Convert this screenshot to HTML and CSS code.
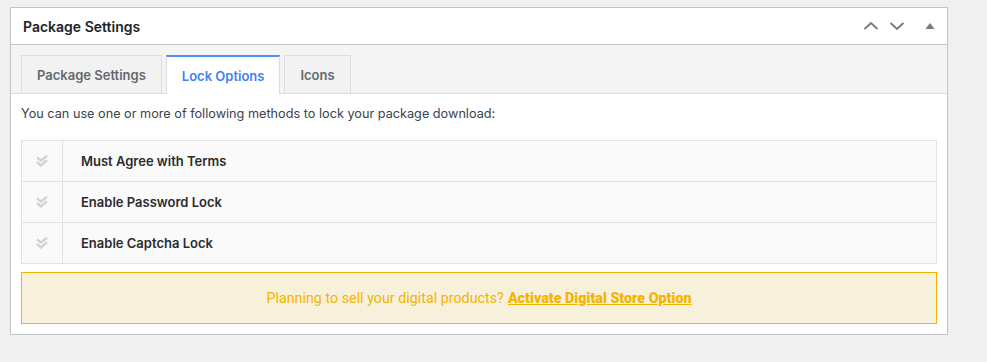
FILE: index.html
```html
<!DOCTYPE html>
<html lang="en">
<head>
    <meta charset="UTF-8">
    <meta name="viewport" content="width=device-width, initial-scale=1.0">
    <title>Package Settings</title>
    <link rel="stylesheet" href="styles.css">
</head>
<body>

    <div class="postbox">
        <!-- Box header -->
        <div class="postbox-header">
            <h2>Package Settings</h2>
            <div class="handle-actions">
                <button class="handle-btn" aria-label="Move up">
                    <svg width="16" height="16" viewBox="0 0 16 16"><path d="M1.5 11 L8 5 L14.5 11" fill="none" stroke="#787c82" stroke-width="2"/></svg>
                </button>
                <button class="handle-btn" aria-label="Move down">
                    <svg width="16" height="16" viewBox="0 0 16 16"><path d="M1.5 5 L8 11 L14.5 5" fill="none" stroke="#787c82" stroke-width="2"/></svg>
                </button>
                <button class="handle-btn toggle" aria-label="Toggle panel">
                    <svg width="10" height="8" viewBox="0 0 10 8"><path d="M5 1 L9.5 7 L0.5 7 Z" fill="#787c82"/></svg>
                </button>
            </div>
        </div>

        <!-- Tabs -->
        <div class="tab-strip">
            <div class="tab">Package Settings</div>
            <div class="tab active">Lock Options</div>
            <div class="tab">Icons</div>
        </div>

        <!-- Tab content -->
        <div class="tab-content">
            <p class="intro">You can use one or more of following methods to lock your package download:</p>

            <div class="lock-list">
                <div class="lock-row">
                    <div class="lock-icon">
                        <svg width="12" height="12" viewBox="0 0 12 12"><path d="M1 2.5 L5 5.5 L11 0.8 M1 7 L5 10.5 L11 5.2" fill="none" stroke="#d2d2d2" stroke-width="2.4"/></svg>
                    </div>
                    <div class="lock-label">Must Agree with Terms</div>
                </div>
                <div class="lock-row">
                    <div class="lock-icon">
                        <svg width="12" height="12" viewBox="0 0 12 12"><path d="M1 2.5 L5 5.5 L11 0.8 M1 7 L5 10.5 L11 5.2" fill="none" stroke="#d2d2d2" stroke-width="2.4"/></svg>
                    </div>
                    <div class="lock-label">Enable Password Lock</div>
                </div>
                <div class="lock-row">
                    <div class="lock-icon">
                        <svg width="12" height="12" viewBox="0 0 12 12"><path d="M1 2.5 L5 5.5 L11 0.8 M1 7 L5 10.5 L11 5.2" fill="none" stroke="#d2d2d2" stroke-width="2.4"/></svg>
                    </div>
                    <div class="lock-label">Enable Captcha Lock</div>
                </div>
            </div>

            <div class="store-notice">
                Planning to sell your digital products? <a href="#">Activate Digital Store Option</a>
            </div>
        </div>
    </div>

</body>
</html>
```

FILE: styles.css
```css
body {
    font-family: 'Inter', 'Roboto', sans-serif;
    background-color: #f0f0f1;
    margin: 0;
    padding: 7px 0 0 10px;
}

.postbox {
    width: 936px;
    background-color: #ffffff;
    border: 1px solid #c3c4c7;
    box-shadow: 0 1px 1px rgba(0, 0, 0, 0.04);
}

.postbox-header {
    display: flex;
    align-items: center;
    justify-content: space-between;
    height: 36px;
    border-bottom: 1px solid #c3c4c7;
    padding: 0 0 0 12px;
}

.postbox-header h2 {
    margin: 0;
    font-size: 14px;
    font-weight: 600;
    color: #1d2327;
}

.handle-actions {
    display: flex;
    align-items: center;
}

.handle-btn {
    background: none;
    border: none;
    padding: 0;
    width: 26px;
    height: 36px;
    display: flex;
    align-items: center;
    justify-content: center;
    cursor: pointer;
}

.handle-btn.toggle {
    width: 35px;
    margin-left: 2px;
}

.tab-strip {
    display: flex;
    gap: 4px;
    padding: 10px 10px 0 10px;
    background-color: #f4f4f4;
    border-bottom: 1px solid #dddddd;
    height: 38px;
}

.tab {
    display: flex;
    align-items: center;
    padding: 0 15px;
    height: 38px;
    box-sizing: border-box;
    border: 1px solid #dddddd;
    border-bottom: none;
    background-color: #f2f2f2;
    font-size: 13px;
    font-weight: 600;
    color: #646970;
    margin-bottom: -1px;
}

.tab.active {
    background-color: #ffffff;
    border-top: 2px solid #4f8ff7;
    height: 39px;
    color: #3d82f6;
}

.tab-content {
    padding: 0 10px 10px 10px;
}

.intro {
    margin: 0;
    padding: 11px 0 17px 0;
    font-size: 12.7px;
    color: #3c434a;
    line-height: 18px;
}

.lock-list {
    border: 1px solid #e2e2e2;
    background-color: #fafafa;
}

.lock-row {
    display: flex;
    height: 40px;
    border-top: 1px solid #e2e2e2;
}

.lock-row:first-child {
    border-top: none;
}

.lock-icon {
    width: 40px;
    border-right: 1px solid #e2e2e2;
    display: flex;
    align-items: center;
    justify-content: center;
}

.lock-label {
    display: flex;
    align-items: center;
    padding-left: 18px;
    font-size: 13px;
    font-weight: 600;
    color: #2c2c2c;
}

.store-notice {
    margin-top: 8px;
    height: 50px;
    display: flex;
    align-items: center;
    justify-content: center;
    gap: 4px;
    border: 1px solid #f5b400;
    background-color: #f7f1dc;
    font-family: 'Roboto', sans-serif;
    font-size: 14.3px;
    color: #f5b400;
}

.store-notice a {
    color: #f5b400;
    font-weight: 900;
    text-decoration: underline;
}
```
